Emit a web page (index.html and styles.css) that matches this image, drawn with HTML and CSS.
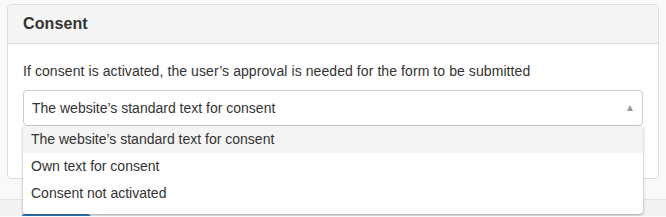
FILE: index.html
```html
<!DOCTYPE html>
<html lang="en">
<head>
  <meta charset="UTF-8" />
  <title>Consent</title>
  <link rel="stylesheet" href="styles.css">
</head>
<body>
  <div class="page">
    <div class="panel">
      <div class="panel-heading">Consent</div>
      <div class="panel-body">
        <p>If consent is activated, the user’s approval is needed for the form to be submitted</p>
        <div class="select-wrap">
          <div class="select">
            <span>The website’s standard text for consent</span>
            <span class="arrow"></span>
          </div>
          <ul class="dropdown">
            <li class="active">The website’s standard text for consent</li>
            <li>Own text for consent</li>
            <li>Consent not activated</li>
          </ul>
        </div>
      </div>
    </div>
  </div>
  <div class="footer">
    <button class="btn" aria-label="Save"></button>
  </div>
</body>
</html>
```

FILE: styles.css
```css
body {
  margin: 0;
  background: #f9f9f9;
  font-family: "Liberation Sans", Arial, sans-serif;
  font-size: 14px;
  color: #333;
  overflow: hidden;
}

.page {
  padding: 4px 7px 0;
  height: 199px;
  box-sizing: border-box;
  position: relative;
  z-index: 1;
}

.panel {
  width: 652px;
  background: #fff;
  border: 1px solid #ddd;
  border-radius: 4px;
  box-sizing: border-box;
}

.panel-heading {
  height: 38px;
  line-height: 38px;
  padding: 0 15px;
  background: #f5f5f5;
  border-bottom: 1px solid #ddd;
  border-radius: 4px 4px 0 0;
  font-size: 16px;
  font-weight: bold;
  letter-spacing: 0.1px;
}

.panel-body {
  padding: 17px 15px 0;
  height: 134px;
  box-sizing: border-box;
}

.panel-body p {
  margin: 0 0 9px;
  line-height: 20px;
  letter-spacing: 0.08px;
}

.select-wrap {
  position: relative;
}

.select {
  height: 34px;
  padding: 0 8px;
  border: 1px solid #ccc;
  border-radius: 4px;
  display: flex;
  align-items: center;
  justify-content: space-between;
}

.arrow {
  width: 0;
  height: 0;
  border-left: 3.5px solid transparent;
  border-right: 3.5px solid transparent;
  border-bottom: 6px solid #999;
  margin-right: 1px;
}

.dropdown {
  position: absolute;
  top: 36px;
  left: 0;
  right: 0;
  margin: 0;
  padding: 0 0 7px;
  list-style: none;
  background: #fff;
  border-radius: 0 0 4px 4px;
  box-shadow: 0 1px 3px rgba(0, 0, 0, 0.35);
}

.dropdown li {
  height: 27px;
  line-height: 27px;
  padding: 0 8px;
}

.dropdown li.active {
  background: #f4f4f4;
}

.footer {
  border-top: 1px solid #e3e3e3;
  background: #f2f2f2;
  height: 17px;
  padding: 14px 21px 0;
  box-sizing: border-box;
  overflow: hidden;
}

.btn {
  display: block;
  width: 70px;
  height: 34px;
  border: none;
  border-radius: 4px;
  background: #337ab7;
}
```
